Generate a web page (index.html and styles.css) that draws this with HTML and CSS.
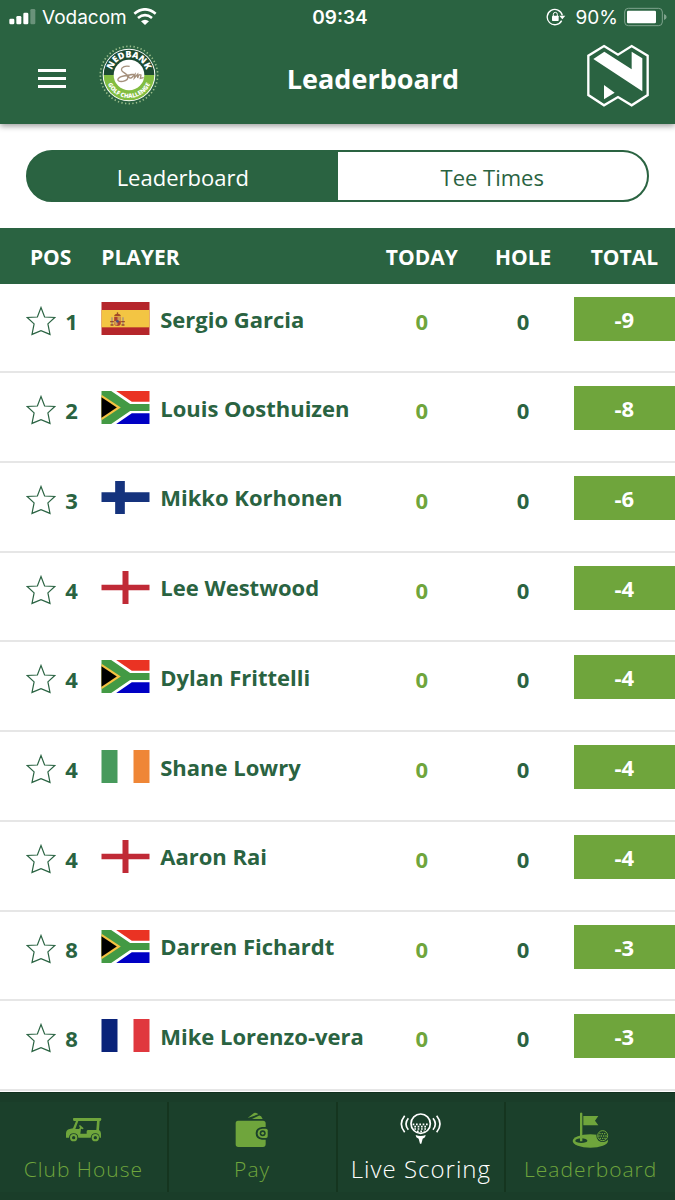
FILE: index.html
```html
<!DOCTYPE html>
<html lang="en">
<head>
    <meta charset="UTF-8">
    <meta name="viewport" content="width=device-width, initial-scale=1.0">
    <title>Leaderboard</title>
    <link rel="stylesheet" href="styles.css">
</head>
<body>
    <!-- Shared shapes -->
    <svg class="sprite" aria-hidden="true">
        <symbol id="star" viewBox="0 0 30 30">
            <path d="M15 1.5 L18.6 11 L28.8 11.5 L21.9 17.9 L24 28.4 L15 24.6 L6 28.4 L8.1 17.9 L1.2 11.5 L11.4 11 Z" fill="none" stroke="#2b6443" stroke-width="1.2"/>
        </symbol>
        <symbol id="flag-es" viewBox="0 0 144 99">
            <rect width="144" height="99" fill="#b5262b"/>
            <rect y="24" width="144" height="52" fill="#f3c543"/>
            <path d="M29 46h5v24h-5zM62 46h5v24h-5z" fill="#b79a74"/>
            <path d="M26 57h11v4H26zM59 57h11v4H59zM27 67h9v4h-9zM60 67h9v4h-9z" fill="#9a4a2d"/>
            <path d="M38 45h20v18q0 9-10 9t-10-9z" fill="#ad4030"/>
            <path d="M48 45h10v12H48zM38 57h10v13q-10-1-10-8z" fill="#d09a55"/>
            <circle cx="48" cy="58" r="4" fill="#4c4d79"/>
            <path d="M38 43q0-8 10-8t10 8z" fill="#a34a27"/>
            <path d="M46 31h4v5h-4z" fill="#9a4a2d"/>
        </symbol>
        <symbol id="flag-za" viewBox="0 0 144 99">
            <rect width="144" height="99" fill="#fff"/>
            <path d="M44 0H144V32H91z" fill="#ea3323"/>
            <path d="M44 99H144V67H91z" fill="#0000c4"/>
            <path d="M0 0H29L86 39H144V60H86L29 99H0z" fill="#439a44"/>
            <path d="M0 11L58 49.500L0 88z" fill="#f5c242"/>
            <path d="M0 19L46 49.500L0 80z" fill="#000"/>
        </symbol>
        <symbol id="flag-fi" viewBox="0 0 144 99">
            <rect width="144" height="99" fill="#fff"/>
            <path d="M0 34H41V0H70V34H144V63H70V99H41V63H0z" fill="#15337d"/>
        </symbol>
        <symbol id="flag-en" viewBox="0 0 144 99">
            <rect width="144" height="99" fill="#fff"/>
            <path d="M0 41H63V0H81V41H144V58H81V99H63V58H0z" fill="#c02a36"/>
        </symbol>
        <symbol id="flag-ie" viewBox="0 0 144 99">
            <rect width="144" height="99" fill="#fff"/>
            <rect width="48" height="99" fill="#479a5c"/>
            <rect x="96" width="48" height="99" fill="#ef8636"/>
        </symbol>
        <symbol id="flag-fr" viewBox="0 0 144 99">
            <rect width="144" height="99" fill="#fff"/>
            <rect width="48" height="99" fill="#0a237a"/>
            <rect x="96" width="48" height="99" fill="#e0383e"/>
        </symbol>
    </svg>

    <header class="header">
        <div class="status-bar">
            <div class="status-left">
                <svg width="27" height="18" viewBox="0 0 81 54" fill="#fff" aria-hidden="true">
                    <rect x="1" y="32" width="15" height="17" rx="4"/>
                    <rect x="22" y="24" width="15" height="25" rx="4"/>
                    <rect x="43" y="14" width="15" height="35" rx="4"/>
                    <rect x="64" y="3" width="15" height="46" rx="4" opacity=".3"/>
                </svg>
                <span>Vodacom</span>
                <svg width="24" height="18" viewBox="0 0 72 54" fill="none" stroke="#fff" stroke-width="8" aria-hidden="true">
                    <path d="M4 17Q36-9 68 17M15 30Q36 13 57 30"/>
                    <path d="M36 51L24 40Q36 31 48 40z" fill="#fff" stroke="none"/>
                </svg>
            </div>
            <div class="clock">09:34</div>
            <div class="status-right">
                <svg width="20" height="18" viewBox="0 0 60 54" aria-hidden="true">
                    <path d="M47 38A23 23 0 1 1 49 22" fill="none" stroke="#fff" stroke-width="4"/>
                    <path d="M40 23H58L49 34z" fill="#fff"/>
                    <rect x="18" y="23" width="20" height="16" rx="2" fill="#fff"/>
                    <path d="M22 24V19Q22 13 28 13T34 19V24" fill="none" stroke="#fff" stroke-width="3"/>
                </svg>
                <span>90%</span>
                <svg width="43" height="20" viewBox="0 0 129 60" aria-hidden="true">
                    <rect x="2" y="4" width="113" height="52" rx="11" fill="none" stroke="#7fa38d" stroke-width="3"/>
                    <rect x="9" y="11" width="87" height="38" rx="4" fill="#fff"/>
                    <path d="M120 21Q128 24 128 30T120 39z" fill="#7fa38d"/>
                </svg>
            </div>
        </div>
        <div class="title-bar">
            <div class="title-left">
                <button class="menu-button" type="button" aria-label="Menu"><span></span><span></span><span></span></button>
                <svg class="badge-logo" viewBox="0 0 180 180" role="img" aria-label="Nedbank Golf Challenge">
                    <defs>
                        <path id="arc-top" d="M37 90A53 53 0 0 1 143 90"/>
                        <path id="arc-bottom" d="M21 90A69 69 0 0 0 159 90"/>
                    </defs>
                    <circle cx="90" cy="90" r="86" fill="none" stroke="#9bbd8b" stroke-width="5" stroke-dasharray="4 7"/>
                    <circle cx="90" cy="90" r="79" fill="#fff"/>
                    <path d="M14 90A76 76 0 0 1 166 90z" fill="#1c4a31"/>
                    <path d="M14 90A76 76 0 0 0 166 90z" fill="#82bd41"/>
                    <circle cx="90" cy="90" r="46" fill="#fff"/>
                    <text class="badge-top"><textPath href="#arc-top" startOffset="50%">NEDBANK</textPath></text>
                    <text class="badge-bottom"><textPath href="#arc-bottom" startOffset="50%">GOLF CHALLENGE</textPath></text>
                    <path d="M92 64C70 60 60 74 74 82S94 104 72 109C50 112 52 98 74 93S112 88 98 88S88 104 98 98L108 88L106 99L116 88L116 99Q119 86 126 90L124 100L134 98" fill="none" stroke="#a5907c" stroke-width="4"/>
                </svg>
            </div>
            <h1>Leaderboard</h1>
            <svg class="bank-logo" viewBox="412 131 186 189" role="img" aria-label="Nedbank">
                <path d="M463 137L505 163L546 137L594 166V284L546 315L505 290L463 315L416 284V166z" fill="none" stroke="#fff" stroke-width="7"/>
                <path d="M431 176L464 154L546 207V154L578 174V273zM463 254L495 277L463 297z" fill="#fff"/>
            </svg>
        </div>
    </header>

    <main>
        <div class="tabs">
            <button class="tab active" type="button">Leaderboard</button>
            <button class="tab" type="button">Tee Times</button>
        </div>

        <table>
            <thead>
                <tr><th class="pos">POS</th><th class="player">PLAYER</th><th>TODAY</th><th>HOLE</th><th>TOTAL</th></tr>
            </thead>
            <tbody>
                <tr>
                    <td><div class="rank"><button type="button" aria-label="Follow Sergio Garcia"><svg><use href="#star"/></svg></button>1</div></td>
                    <td><div class="name"><svg><use href="#flag-es"/></svg>Sergio Garcia</div></td>
                    <td class="today">0</td><td>0</td><td class="total"><div>-9</div></td>
                </tr>
                <tr>
                    <td><div class="rank"><button type="button" aria-label="Follow Louis Oosthuizen"><svg><use href="#star"/></svg></button>2</div></td>
                    <td><div class="name"><svg><use href="#flag-za"/></svg>Louis Oosthuizen</div></td>
                    <td class="today">0</td><td>0</td><td class="total"><div>-8</div></td>
                </tr>
                <tr>
                    <td><div class="rank"><button type="button" aria-label="Follow Mikko Korhonen"><svg><use href="#star"/></svg></button>3</div></td>
                    <td><div class="name"><svg><use href="#flag-fi"/></svg>Mikko Korhonen</div></td>
                    <td class="today">0</td><td>0</td><td class="total"><div>-6</div></td>
                </tr>
                <tr>
                    <td><div class="rank"><button type="button" aria-label="Follow Lee Westwood"><svg><use href="#star"/></svg></button>4</div></td>
                    <td><div class="name"><svg><use href="#flag-en"/></svg>Lee Westwood</div></td>
                    <td class="today">0</td><td>0</td><td class="total"><div>-4</div></td>
                </tr>
                <tr>
                    <td><div class="rank"><button type="button" aria-label="Follow Dylan Frittelli"><svg><use href="#star"/></svg></button>4</div></td>
                    <td><div class="name"><svg><use href="#flag-za"/></svg>Dylan Frittelli</div></td>
                    <td class="today">0</td><td>0</td><td class="total"><div>-4</div></td>
                </tr>
                <tr>
                    <td><div class="rank"><button type="button" aria-label="Follow Shane Lowry"><svg><use href="#star"/></svg></button>4</div></td>
                    <td><div class="name"><svg><use href="#flag-ie"/></svg>Shane Lowry</div></td>
                    <td class="today">0</td><td>0</td><td class="total"><div>-4</div></td>
                </tr>
                <tr>
                    <td><div class="rank"><button type="button" aria-label="Follow Aaron Rai"><svg><use href="#star"/></svg></button>4</div></td>
                    <td><div class="name"><svg><use href="#flag-en"/></svg>Aaron Rai</div></td>
                    <td class="today">0</td><td>0</td><td class="total"><div>-4</div></td>
                </tr>
                <tr>
                    <td><div class="rank"><button type="button" aria-label="Follow Darren Fichardt"><svg><use href="#star"/></svg></button>8</div></td>
                    <td><div class="name"><svg><use href="#flag-za"/></svg>Darren Fichardt</div></td>
                    <td class="today">0</td><td>0</td><td class="total"><div>-3</div></td>
                </tr>
                <tr>
                    <td><div class="rank"><button type="button" aria-label="Follow Mike Lorenzo-vera"><svg><use href="#star"/></svg></button>8</div></td>
                    <td><div class="name"><svg><use href="#flag-fr"/></svg>Mike Lorenzo-vera</div></td>
                    <td class="today">0</td><td>0</td><td class="total"><div>-3</div></td>
                </tr>
            </tbody>
        </table>
    </main>

    <nav class="bottom-nav">
        <a href="#">
            <svg width="37" height="36" viewBox="195 97 111 108" aria-hidden="true">
                <path d="M222 115H301Q304 115 304 119T301 124H299L297 151Q303 154 303 162V174H299Q298 161 286 161T272 174H235Q234 161 221 161T207 174H198V162Q198 150 209 148L219 146L228 124H222Q219 124 219 119T222 115zM235 124L226 148H237L240 144L237 138L240 136L251 146L248 149L243 147L241 162H260V155Q260 151 265 151H289L291 124z" fill="#6fa53c" fill-rule="evenodd"/>
                <circle cx="221" cy="174" r="8" fill="none" stroke="#6fa53c" stroke-width="6"/>
                <circle cx="286" cy="174" r="8" fill="none" stroke="#6fa53c" stroke-width="6"/>
            </svg>
            <span>Club House</span>
        </a>
        <a href="#">
            <svg width="34" height="36" viewBox="707 97 102 108" aria-hidden="true">
                <path d="M745 115L764 100Q768 98 773 101L777 104zM758 118L778 108Q785 106 790 118z" fill="#6fa53c"/>
                <path d="M716 123H791Q799 123 799 131V142H788Q769 144 769 161T788 180H799V193Q799 202 791 202H717Q709 202 709 194V131Q709 123 716 123z" fill="#6fa53c"/>
                <path d="M789 147H800Q805 147 805 152V170Q805 175 800 175H789Q775 174 775 161T789 147z" fill="#6fa53c"/>
                <circle cx="790" cy="161" r="9" fill="#1b402b"/>
                <circle cx="790" cy="161" r="4" fill="#6fa53c"/>
            </svg>
            <span>Pay</span>
        </a>
        <a href="#" class="current">
            <svg width="41" height="36" viewBox="198 91 123 108" aria-hidden="true">
                <g fill="none" stroke="#fff" stroke-width="5">
                    <circle cx="260" cy="126" r="29"/>
                    <path d="M212 102Q192 127 212 152M223 110Q209 127 223 144M308 102Q328 127 308 152M297 110Q311 127 297 144"/>
                    <path d="M236 128H284M241 135H280M241 142H280M249 149H272" stroke-dasharray="5 5"/>
                </g>
                <path d="M245 160Q260 166 275 160L273 167L266 171L262 186H258L254 171L247 167z" fill="#fff"/>
            </svg>
            <span>Live Scoring</span>
        </a>
        <a href="#">
            <svg width="37" height="36" viewBox="714 97 111 108" aria-hidden="true">
                <ellipse cx="769" cy="184" rx="53" ry="20" fill="#6fa53c"/>
                <ellipse cx="742" cy="183" rx="18" ry="7" fill="#1b402b"/>
                <path d="M738 101Q741 96 745 101V185H738zM748 109H793L783 123L793 137H748z" fill="#6fa53c"/>
                <circle cx="806" cy="168" r="19" fill="#1b402b"/>
                <circle cx="806" cy="168" r="15" fill="none" stroke="#6fa53c" stroke-width="3"/>
                <path d="M796 162H817M793 169H820M797 176H816" stroke="#6fa53c" stroke-width="4" stroke-dasharray="4 3"/>
            </svg>
            <span>Leaderboard</span>
        </a>
    </nav>
</body>
</html>
```

FILE: styles.css
```css
* {
    box-sizing: border-box;
}

body {
    margin: 0;
    min-height: 100vh;
    display: flex;
    flex-direction: column;
    background-color: #fff;
    color: #2a6341;
    font-family: "Open Sans", sans-serif;
}

button {
    font-family: inherit;
    border: none;
    padding: 0;
    background: none;
    color: inherit;
    cursor: pointer;
}

svg {
    display: block;
    flex-shrink: 0;
}

.sprite {
    position: absolute;
    width: 0;
    height: 0;
}

/* Header */
.header {
    background-color: #2a6341;
    color: #fff;
    box-shadow: 0 2px 6px rgba(0, 0, 0, 0.4);
}

.status-bar {
    display: grid;
    grid-template-columns: 1fr auto 1fr;
    align-items: center;
    height: 34px;
    padding: 0 8px 0 9px;
    font-family: Inter, sans-serif;
    font-size: 19px;
}

.status-left,
.status-right {
    display: flex;
    align-items: center;
    gap: 6px;
}

.status-right {
    justify-content: flex-end;
}

.status-right span {
    padding-left: 4px;
}

.clock {
    padding-left: 4px;
    font-weight: 600;
}

.title-bar {
    display: grid;
    grid-template-columns: auto 1fr auto;
    align-items: center;
    height: 90px;
    padding: 0 26px 8px 38px;
}

.title-left {
    display: flex;
    align-items: center;
    gap: 33px;
}

.menu-button {
    display: flex;
    flex-direction: column;
    gap: 5px;
    width: 28px;
    padding: 6px 0 0;
}

.menu-button span {
    height: 3px;
    background-color: #fff;
}

.badge-logo {
    width: 60px;
    height: 60px;
}

.badge-top,
.badge-bottom {
    fill: #fff;
    font-weight: 800;
    text-anchor: middle;
}

.badge-top {
    font-size: 27px;
}

.badge-bottom {
    font-size: 18px;
}

h1 {
    margin: 0;
    padding-top: 8px;
    font-size: 27px;
    line-height: 36px;
    text-align: center;
}

.bank-logo {
    width: 62px;
    height: 63px;
}

/* Tabs */
main {
    flex: 1;
    display: flex;
    flex-direction: column;
    padding-bottom: 1px;
}

.tabs {
    display: flex;
    margin: 26px;
    height: 52px;
    border: 2px solid #2a6341;
    border-radius: 26px;
    background-color: #2a6341;
    overflow: hidden;
}

.tab {
    flex: 1;
    padding-top: 2px;
    background-color: #fff;
    font-size: 22px;
}

.tab.active {
    background-color: #2a6341;
    color: #fff;
}

/* Scores */
table {
    flex: 1;
    width: 100%;
    table-layout: fixed;
    border-collapse: collapse;
    font-size: 22px;
    font-weight: 700;
    line-height: 30px;
}

thead tr {
    height: 56px;
    background-color: #2a6341;
    color: #fff;
}

th {
    width: 15%;
    padding: 2px 0 0;
    font-size: 21px;
    font-weight: 700;
}

th.player {
    width: 40%;
    text-align: left;
}

td {
    padding: 22px 0 0;
    text-align: center;
    vertical-align: top;
}

tbody tr {
    border-bottom: 2px solid #e6e6e6;
}

.rank {
    display: flex;
    justify-content: center;
    gap: 9px;
    padding-left: 3px;
}

.rank svg {
    width: 30px;
    height: 30px;
}

.name {
    display: flex;
    align-items: center;
    gap: 10px;
    margin-top: -4px;
    white-space: nowrap;
}

.name svg {
    width: 49px;
    height: 33px;
}

.today {
    color: #6fa53c;
}

.total {
    padding-top: 13px;
}

.total div {
    background-color: #6fa53c;
    color: #fff;
    line-height: 44px;
}

/* Bottom navigation */
.bottom-nav {
    display: grid;
    grid-template-columns: repeat(4, 1fr);
    height: 108px;
    padding: 9px 0 8px;
    background-color: #1a3d29;
    border-top: 1px solid #11301e;
}

.bottom-nav a {
    display: flex;
    flex-direction: column;
    align-items: center;
    gap: 7px;
    padding-top: 10px;
    background-color: #1b402b;
    border-right: 2px solid #15351f;
    color: #6fa53c;
    font-size: 21px;
    font-weight: 300;
    letter-spacing: 1px;
    line-height: 28px;
    text-decoration: none;
    white-space: nowrap;
}

.bottom-nav a:last-child {
    border-right: none;
}

.bottom-nav .current {
    color: #fff;
    font-size: 24px;
}
```
